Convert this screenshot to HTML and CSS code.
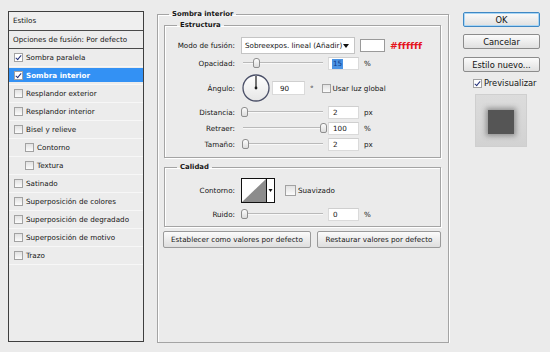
FILE: index.html
```html
<!DOCTYPE html>
<html lang="es">
<head>
<meta charset="UTF-8" />
<title>Estilo de capa</title>
<link rel="stylesheet" href="styles.css">
</head>
<body>

<div class="dialog">

  <div class="styles">
    <div class="styles-head">Estilos</div>
    <div class="styles-blend">Opciones de fusión: Por defecto</div>
    <div class="styles-item"><span class="cb on"></span>Sombra paralela</div>
    <div class="styles-item sel"><span class="cb on"></span>Sombra interior</div>
    <div class="styles-item"><span class="cb"></span>Resplandor exterior</div>
    <div class="styles-item"><span class="cb"></span>Resplandor interior</div>
    <div class="styles-item"><span class="cb"></span>Bisel y relieve</div>
    <div class="styles-item sub"><span class="cb"></span>Contorno</div>
    <div class="styles-item sub"><span class="cb"></span>Textura</div>
    <div class="styles-item"><span class="cb"></span>Satinado</div>
    <div class="styles-item"><span class="cb"></span>Superposición de colores</div>
    <div class="styles-item"><span class="cb"></span>Superposición de degradado</div>
    <div class="styles-item"><span class="cb"></span>Superposición de motivo</div>
    <div class="styles-item"><span class="cb"></span>Trazo</div>
  </div>

  <fieldset class="panel">
    <legend>Sombra interior</legend>

    <fieldset class="group structure">
      <legend>Estructura</legend>

      <div class="row mode-row">
        <span class="lbl">Modo de fusión:</span>
        <div class="select">Sobreexpos. lineal (Añadir)<span class="arrow"></span></div>
        <span class="swatch"></span>
        <span class="hex">#ffffff</span>
      </div>

      <div class="row">
        <span class="lbl">Opacidad:</span>
        <div class="slider"><span class="thumb" style="--v:15"></span></div>
        <span class="field"><span class="selected">15</span></span>
        <span class="unit">%</span>
      </div>

      <div class="row angle-row">
        <span class="lbl">Ángulo:</span>
        <svg class="dial" width="28" height="28" viewBox="0 0 28 28">
          <defs>
            <linearGradient id="dialfill" x1="0" y1="0" x2="0" y2="1">
              <stop offset="0" stop-color="#ffffff"/>
              <stop offset="1" stop-color="#e6e6e6"/>
            </linearGradient>
          </defs>
          <circle cx="14" cy="14" r="13" fill="url(#dialfill)" stroke="#4b5068" stroke-width="1.3"/>
          <line x1="14" y1="14" x2="14" y2="2" stroke="#1c1c1c" stroke-width="1.2"/>
          <circle cx="14" cy="14" r="1.4" fill="#1c1c1c"/>
        </svg>
        <span class="field angle">90</span>
        <span class="unit deg">°</span>
        <span class="cb"></span>
        <span class="cb-text">Usar luz global</span>
      </div>

      <div class="row">
        <span class="lbl">Distancia:</span>
        <div class="slider"><span class="thumb" style="--v:0"></span></div>
        <span class="field">2</span>
        <span class="unit">px</span>
      </div>

      <div class="row">
        <span class="lbl">Retraer:</span>
        <div class="slider"><span class="thumb" style="--v:100"></span></div>
        <span class="field">100</span>
        <span class="unit">%</span>
      </div>

      <div class="row">
        <span class="lbl">Tamaño:</span>
        <div class="slider"><span class="thumb" style="--v:1"></span></div>
        <span class="field">2</span>
        <span class="unit">px</span>
      </div>
    </fieldset>

    <fieldset class="group quality">
      <legend>Calidad</legend>

      <div class="row contour-row">
        <span class="lbl">Contorno:</span>
        <svg class="contour" width="34" height="25" viewBox="0 0 34 25">
          <rect x="0.5" y="0.5" width="33" height="24" fill="#ffffff" stroke="#111111"/>
          <polygon points="1,24 25,1 25,24" fill="#8c8c8c"/>
          <line x1="25.5" y1="1" x2="25.5" y2="24" stroke="#111111"/>
          <polygon points="27.5,11 31.5,11 29.5,14" fill="#111111"/>
        </svg>
        <span class="cb smooth"></span>
        <span class="cb-text">Suavizado</span>
      </div>

      <div class="row">
        <span class="lbl">Ruido:</span>
        <div class="slider"><span class="thumb" style="--v:0"></span></div>
        <span class="field">0</span>
        <span class="unit">%</span>
      </div>
    </fieldset>

    <div class="defaults">
      <button class="btn-wide">Establecer como valores por defecto</button>
      <button class="btn-reset">Restaurar valores por defecto</button>
    </div>
  </fieldset>

  <div class="side">
    <button class="btn ok">OK</button>
    <button class="btn">Cancelar</button>
    <button class="btn">Estilo nuevo...</button>
    <div class="preview-check"><span class="cb on"></span>Previsualizar</div>
    <div class="preview"><span class="preview-swatch"></span></div>
  </div>

</div>

</body>
</html>
```

FILE: styles.css
```css
body {
  margin: 0;
  background: #ebebeb;
  font-family: "DejaVu Sans", sans-serif;
  font-size: 7.2px;
  color: #151515;
}
.dialog {
  display: flex;
  align-items: flex-start;
  padding: 9px 0 0 8px;
}

/* lijst met stijlen links */
.styles {
  width: 136px;
  height: 331px;
  box-sizing: border-box;
  margin-top: 2px;
  margin-right: 13px;
  border: 1px solid #3f3f3f;
  background: #ececec;
  flex: none;
}
.styles-head {
  height: 18px;
  line-height: 18px;
  padding-left: 4px;
  background: #efefef;
  border-bottom: 1px solid #4a4a4a;
}
.styles-blend {
  height: 17px;
  line-height: 17px;
  padding-left: 4px;
  border-bottom: 1px solid #4a4a4a;
}
.styles-item {
  display: flex;
  align-items: center;
  height: 17px;
  padding-left: 5px;
  border-bottom: 1px solid #f7f7f7;
}
.styles-item.sub {
  padding-left: 16px;
}
.styles-item.sel {
  background: linear-gradient(#3391f4, #3391f4) 0 1px / 100% 14px no-repeat;
  color: #ffffff;
  font-weight: bold;
}
.styles-item .cb {
  margin-right: 3px;
}

/* checkbox */
.cb {
  position: relative;
  display: inline-block;
  width: 9px;
  height: 9px;
  box-sizing: border-box;
  border: 1px solid #a2a2a2;
  background: linear-gradient(#e2e2e2, #fbfbfb);
  flex: none;
}
.cb.on {
  background: #ffffff;
}
.cb.on::after {
  content: "";
  position: absolute;
  left: 2px;
  top: 0px;
  width: 2px;
  height: 5px;
  border-right: 1.5px solid #23307a;
  border-bottom: 1.5px solid #23307a;
  transform: rotate(40deg);
}

/* middenpaneel */
fieldset {
  margin: 0;
  min-width: 0;
  border: 1px solid #a4a4a4;
  box-shadow: inset 1px 1px 0 #ffffff, 1px 1px 0 #ffffff;
}
legend {
  line-height: 10px;
  padding: 0 3px;
  font-weight: bold;
  font-size: 6.9px;
}
.panel {
  width: 292px;
  height: 334px;
  box-sizing: border-box;
  padding: 1px 7px 0 6px;
  flex: none;
}
.panel > legend {
  margin-left: 5px;
}
.group {
  padding: 0;
}
.group > legend {
  margin-left: 12px;
}
.structure {
  padding: 7px 0 6px 0;
}
.quality {
  margin-top: 4px;
  padding: 6px 0 5px 0;
}

.row {
  display: flex;
  align-items: center;
  height: 14px;
  margin-top: 2px;
}
.lbl {
  width: 70px;
  margin-right: 6px;
  text-align: right;
  flex: none;
}
.mode-row {
  height: 17px;
  margin-top: 0;
}
.select {
  position: relative;
  width: 114px;
  height: 17px;
  box-sizing: border-box;
  line-height: 15px;
  padding-left: 3px;
  border: 1px solid #c4c4c4;
  background: #ffffff;
}
.arrow {
  position: absolute;
  right: 5px;
  top: 6px;
  border-left: 3px solid transparent;
  border-right: 3px solid transparent;
  border-top: 4px solid #111111;
}
.swatch {
  width: 25px;
  height: 13px;
  box-sizing: border-box;
  margin-left: 5px;
  border: 1px solid #9a9a9a;
  background: #ffffff;
}
.hex {
  margin-left: 5px;
  color: #e5141c;
  font-weight: bold;
  font-size: 9.3px;
}

.slider {
  position: relative;
  width: 86px;
  height: 10px;
  flex: none;
}
.slider::before {
  content: "";
  position: absolute;
  left: 2px;
  right: 4px;
  top: 4px;
  height: 1px;
  background: #b9b9b9;
  box-shadow: 0 1px 0 #f8f8f8;
}
/* schuifknop: --v is de waarde 0-100, baan is 79px */
.thumb {
  position: absolute;
  top: 0;
  left: calc(var(--v) * 0.79px);
  width: 7px;
  height: 10px;
  box-sizing: border-box;
  border: 1px solid #8e8e8e;
  border-radius: 3px 3px 2px 2px;
  background: linear-gradient(#fdfdfd, #dcdcdc);
}
.field {
  width: 31px;
  height: 13px;
  box-sizing: border-box;
  margin-left: 1px;
  padding-left: 4px;
  line-height: 12px;
  border: 1px solid #dadada;
  border-top-color: #cfcfcf;
  background: #ffffff;
  flex: none;
}
.selected {
  display: inline-block;
  padding: 0 1px;
  margin-left: -1px;
  background: #4a93e4;
  color: #0c3a88;
  line-height: 10px;
}
.unit {
  margin-left: 5px;
}
.angle-row {
  height: 28px;
  margin-top: 4px;
}
.dial {
  margin-left: 1px;
  flex: none;
}
.field.angle {
  width: 33px;
  height: 14px;
  margin-left: 2px;
  padding-left: 7px;
  line-height: 13px;
}
.deg {
  margin-left: 5px;
  margin-right: 8px;
}
.cb-text {
  margin-left: 2px;
}
.angle-row + .row {
  margin-top: 3px;
}

.contour-row {
  height: 25px;
  margin-top: 0;
}
.contour {
  flex: none;
}
.cb.smooth {
  width: 11px;
  height: 11px;
  margin-left: 10px;
}
.contour-row + .row {
  margin-top: 4px;
}

/* de twee knoppen onderaan */
.defaults {
  display: flex;
  gap: 6px;
  margin: 4px 0 0 -1px;
}
.defaults button {
  height: 17px;
  padding: 0;
  font-family: inherit;
  font-size: 7.2px;
  color: #151515;
  border: 1px solid #9a9a9a;
  border-radius: 2px;
  background: linear-gradient(#fbfbfb, #dedede);
}
.btn-wide {
  width: 149px;
}
.btn-reset {
  width: 125px;
}

/* rechterkolom */
.side {
  width: 77px;
  margin-left: 14px;
  margin-top: 3px;
  flex: none;
  font-size: 8.3px;
}
.btn {
  display: block;
  width: 77px;
  height: 15px;
  padding: 0;
  margin-bottom: 8px;
  font-family: inherit;
  font-size: 8.3px;
  color: #111111;
  border: 1px solid #8c8c8c;
  border-radius: 2px;
  background: linear-gradient(#fbfbfb, #e0e0e0);
}
.btn.ok {
  margin-bottom: 7px;
  border-color: #3f88c4;
  box-shadow: inset 0 0 0 1px #a9d6f5;
}
.preview-check {
  display: flex;
  align-items: center;
  margin-top: -2px;
  padding-left: 10px;
}
.preview-check .cb {
  margin-right: 2px;
}
.preview {
  display: flex;
  align-items: center;
  justify-content: center;
  width: 52px;
  height: 53px;
  box-sizing: border-box;
  margin: 6px 0 0 12px;
  padding-top: 3px;
  border: 1px solid #cfcfcf;
  background: linear-gradient(#dcdcdc, #d2d2d2);
}
.preview-swatch {
  width: 26px;
  height: 24px;
  background: #555555;
  box-shadow: 0 0 5px 2px rgba(60, 60, 60, 0.45);
}
```
